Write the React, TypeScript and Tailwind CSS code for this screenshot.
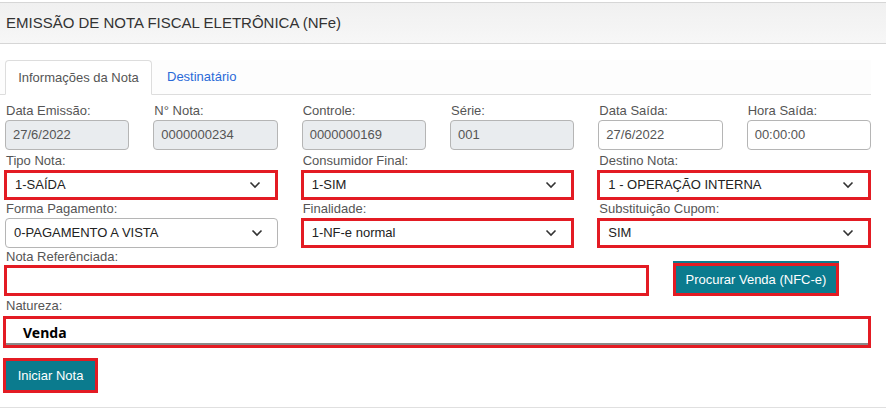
import React from "react";

const RED = "border-[#e31b23]";

function Chevron() {
  return (
    <svg width="12" height="8" viewBox="0 0 12 8" className="shrink-0">
      <polyline points="1.5,1.5 6,6 10.5,1.5" fill="none" stroke="#333" strokeWidth="1.6" />
    </svg>
  );
}

function Label({ children }: { children: React.ReactNode }) {
  return <div className="h-[17px] leading-[17px] text-[13px] text-[#555] pl-[1px]">{children}</div>;
}

function ReadField({ label, value, disabled }: { label: string; value: string; disabled?: boolean }) {
  return (
    <div className="col-span-2 pr-[24px]">
      <Label>{label}</Label>
      <div
        className={
          "mt-[1px] h-[30px] rounded-[4px] border border-[#b5b5b5] px-[7px] flex items-center text-[13px] text-[#555] " +
          (disabled ? "bg-[#e9ecef]" : "bg-white")
        }
      >
        {value}
      </div>
    </div>
  );
}

function SelectField({ label, value, red = true }: { label: string; value: string; red?: boolean }) {
  return (
    <div className="col-span-4 pr-[24px]">
      <Label>{label}</Label>
      <div
        className={
          "mt-[1px] h-[30px] bg-white flex items-center justify-between pl-[8px] pr-[14px] text-[13px] text-[#222] " +
          (red ? "border-[3px] " + RED + " -ml-[1px]" : "border border-[#b5b5b5] rounded-[4px]")
        }
      >
        <span>{value}</span>
        <Chevron />
      </div>
    </div>
  );
}

export default function App() {
  return (
    <div className="w-[886px] h-[410px] bg-white overflow-hidden font-['Liberation_Sans',Arial,sans-serif]">
      {/* Header */}
      <div className="mt-[2px] h-[42px] border-t border-b border-[#d6d6d6] bg-gradient-to-b from-[#f0f0f0] to-[#f7f7f7] flex items-center pl-[6px]">
        <span className="text-[15px] text-[#333]">EMISSÃO DE NOTA FISCAL ELETRÔNICA (NFe)</span>
      </div>

      {/* Tabs */}
      <div className="mt-[16px] w-[871px] h-[35px] flex items-end border-b border-[#ddd] bg-[#fdfdfd]">
        <div className="ml-[5px] h-[35px] w-[147px] -mb-px bg-white border border-[#ddd] border-b-white rounded-t-[4px] flex items-center justify-center text-[13px] text-[#555]">
          Informações da Nota
        </div>
        <div className="h-[34px] px-[15px] flex items-center text-[13px] text-[#2a6ad8]">Destinatário</div>
      </div>

      {/* Form */}
      <div className="pl-[5px] w-[895px] pt-[7px]">
        <div className="grid grid-cols-12">
          <ReadField label="Data Emissão:" value="27/6/2022" disabled />
          <ReadField label="N° Nota:" value="0000000234" disabled />
          <ReadField label="Controle:" value="0000000169" disabled />
          <ReadField label="Série:" value="001" disabled />
          <ReadField label="Data Saída:" value="27/6/2022" />
          <ReadField label="Hora Saída:" value="00:00:00" />
        </div>

        <div className="grid grid-cols-12 mt-[2px]">
          <SelectField label="Tipo Nota:" value="1-SAÍDA" />
          <SelectField label="Consumidor Final:" value="1-SIM" />
          <SelectField label="Destino Nota:" value="1 - OPERAÇÃO INTERNA" />
        </div>

        <div className="grid grid-cols-12">
          <SelectField label="Forma Pagamento:" value="0-PAGAMENTO A VISTA" red={false} />
          <SelectField label="Finalidade:" value="1-NF-e normal" />
          <SelectField label="Substituição Cupom:" value="SIM" />
        </div>

        <div className="grid grid-cols-12">
          <div className="col-span-9 pr-[24px]">
            <Label>Nota Referênciada:</Label>
            <div className={"h-[31px] -ml-[1px] bg-white border-[3px] " + RED}></div>
          </div>
          <div className="col-span-3 flex items-end">
            <button className={"h-[33px] px-[10px] bg-[#0b7b8e] border-[3px] " + RED + " shadow-[0_-2px_0_#0b7b8e] text-white text-[13px]"}>
              Procurar Venda (NFC-e)
            </button>
          </div>
        </div>

        <div className="grid grid-cols-12 mt-[1px]">
          <div className="col-span-12 pr-[24px]">
            <Label>Natureza:</Label>
            <div
              className={
                "mt-[2px] h-[32px] -ml-[2px] bg-white border-[3px] " +
                RED +
                " shadow-[inset_0_-2px_0_#8a8a8a] flex items-center pl-[17px]"
              }
            >
              <span className="font-['Noto_Sans',sans-serif] font-bold text-[14px] text-black">Venda</span>
            </div>
          </div>
        </div>

        <button
          className={
            "mt-[10px] -ml-[2px] h-[35px] w-[95px] bg-[#0b7b8e] border-[3px] " + RED + " text-white text-[13px]"
          }
        >
          Iniciar Nota
        </button>
      </div>

      <div className="mt-[14px] border-t border-[#e0e0e0]" />
    </div>
  );
}
